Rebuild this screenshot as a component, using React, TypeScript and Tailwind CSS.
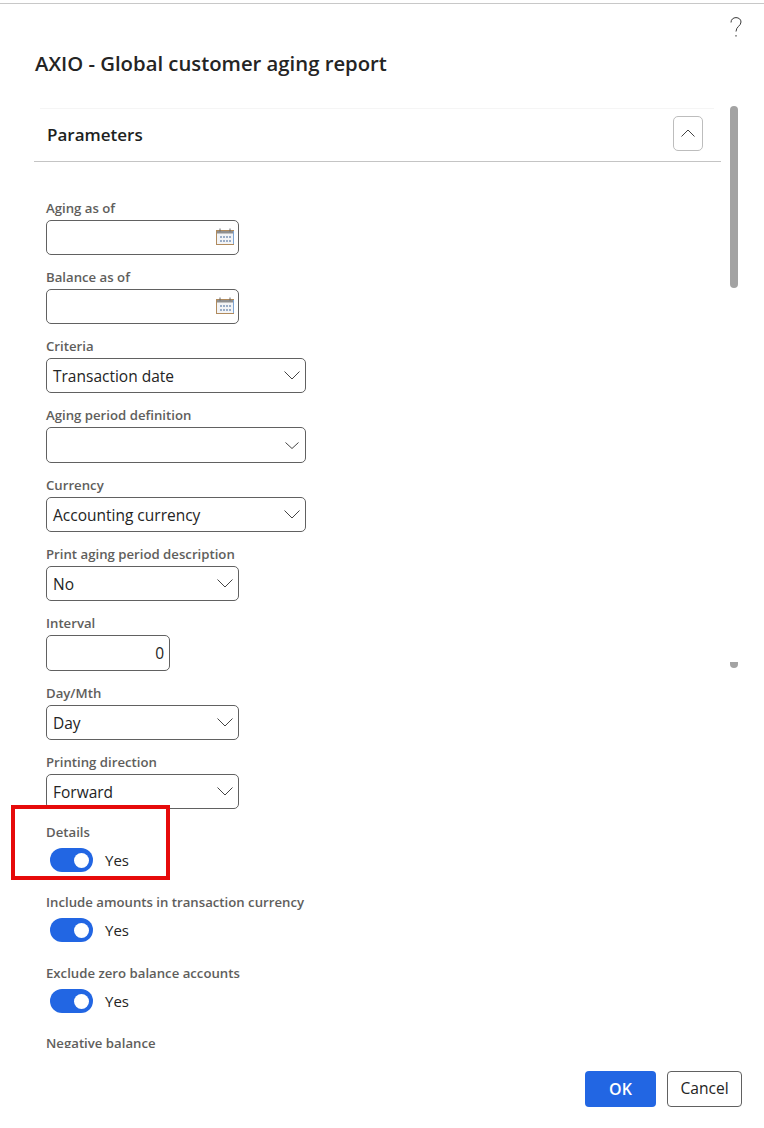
const font = { fontFamily: '"Open Sans", "Noto Sans", sans-serif' };

function Calendar() {
  return (
    <svg width="18" height="17" viewBox="0 0 18 17" className="absolute right-[4px] top-[7px]">
      <rect x="0.5" y="2.5" width="17" height="14" fill="#f3f4f6" stroke="#b08a5c" />
      <rect x="1" y="3" width="16" height="2.5" fill="#8f8f8f" />
      <path d="M4 0.5v3M14 0.5v3" stroke="#666" />
      <path d="M5 8v2M8 8v2M11 8v2M14 8v2M5 12v2M8 12v2M11 12v2M14 12v2" stroke="#5f7ea8" strokeWidth="1.2" />
      <path d="M17.5 3v13" stroke="#7ea6d6" />
    </svg>
  );
}

function Chevron({ small }: { small?: boolean }) {
  return (
    <svg
      width={small ? 14 : 16}
      height={small ? 7 : 9}
      viewBox={small ? "0 0 14 7" : "0 0 16 9"}
      className={small ? "absolute right-[6px] top-[14px]" : "absolute right-[5px] top-[12px]"}
    >
      <path d={small ? "M0.5 0.5L7 6.5L13.5 0.5" : "M0.5 0.5L8 8L15.5 0.5"} fill="none" stroke="#444" strokeWidth="1" />
    </svg>
  );
}

function Label({ text }: { text: string }) {
  return <div className="h-[22px] text-[13.2px] leading-[20px] font-semibold text-[#605e5c] whitespace-nowrap">{text}</div>;
}

function Box({ w, h = "h-[35px]", children }: { w: string; h?: string; children?: React.ReactNode }) {
  return (
    <div className={`relative ${w} ${h} rounded-[5px] border border-[#616161] bg-white pl-[6px] text-[15.5px] leading-[35px] text-[#242424]`}>
      {children}
    </div>
  );
}

function Field({ label, w, h, mb, children }: { label: string; w: string; h?: string; mb: string; children?: React.ReactNode }) {
  return (
    <div className={mb}>
      <Label text={label} />
      <Box w={w} h={h}>{children}</Box>
    </div>
  );
}

function Toggle({ label, mb }: { label: string; mb: string }) {
  return (
    <div className={mb}>
      <Label text={label} />
      <div className="mt-[4px] flex items-center pl-[4px]">
        <div className="flex h-[24px] w-[43px] items-center justify-end rounded-full bg-[#2266e3] pr-[4px]">
          <div className="h-[15px] w-[15px] rounded-full bg-white" />
        </div>
        <span className="ml-[12px] text-[15px] leading-[24px] text-[#242424]">Yes</span>
      </div>
    </div>
  );
}

export default function App() {
  return (
    <div className="relative h-[1128px] w-[764px] overflow-hidden bg-white" style={font}>
      <div className="mt-[3px] h-[1px] bg-[#c8c8c8]" />
      <div className="flex h-[44px] justify-end pr-[22px] pt-[13px]">
        <svg width="12" height="20" viewBox="0 0 12 20">
          <path d="M1 5.5C1 2.5 3.2 0.6 6 0.6C8.8 0.6 11 2.4 11 5C11 9 6 9.5 6 14.5M6 18v1.6" fill="none" stroke="#3a3a3a" strokeWidth="1" />
        </svg>
      </div>
      <h1 className="h-[60px] pl-[35px] text-[20.3px] leading-[30px] font-semibold text-[#242424]">AXIO - Global customer aging report</h1>

      <div className="ml-[40px] mr-[50px] h-[1px] bg-[#f5f5f5]" />
      <div className="ml-[34px] mr-[43px] flex h-[53px] items-center justify-between border-b border-[#c4c4c4] pb-[4px] pl-[13px] pr-[18px]">
        <span className="mt-[4px] text-[17px] font-semibold text-[#201f1e]">Parameters</span>
        <button className="flex h-[35px] w-[30px] items-center justify-center rounded-[5px] border border-[#bdbdbd] bg-white">
          <svg width="14" height="8" viewBox="0 0 14 8">
            <path d="M0.5 7.5L7 1L13.5 7.5" fill="none" stroke="#444" />
          </svg>
        </button>
      </div>

      <div className="h-[886px] overflow-hidden pl-[46px] pt-[36px]">
        <Field label="Aging as of" w="w-[193px]" mb="mb-[12px]"><Calendar /></Field>
        <Field label="Balance as of" w="w-[193px]" mb="mb-[12px]"><Calendar /></Field>
        <Field label="Criteria" w="w-[260px]" mb="mb-[12px]">Transaction date<Chevron /></Field>
        <Field label="Aging period definition" w="w-[260px]" h="h-[36px]" mb="mb-[12px]"><Chevron small /></Field>
        <Field label="Currency" w="w-[260px]" mb="mb-[12px]">Accounting currency<Chevron /></Field>
        <Field label="Print aging period description" w="w-[193px]" mb="mb-[12px]">No<Chevron /></Field>
        <Field label="Interval" w="w-[124px]" h="h-[36px]" mb="mb-[12px]"><div className="pr-[5px] text-right">0</div></Field>
        <Field label="Day/Mth" w="w-[193px]" mb="mb-[12px]">Day<Chevron /></Field>
        <Field label="Printing direction" w="w-[193px]" mb="mb-[13px]">Forward<Chevron /></Field>
        <Toggle label="Details" mb="mb-[20px]" />
        <Toggle label="Include amounts in transaction currency" mb="mb-[21px]" />
        <Toggle label="Exclude zero balance accounts" mb="mb-[20px]" />
        <Label text="Negative balance" />
      </div>

      <div className="flex justify-end gap-[11px] pr-[22px] pt-[23px]">
        <button className="h-[36px] w-[71px] rounded-[4px] bg-[#2266e3] text-[16px] font-semibold text-white">OK</button>
        <button className="h-[36px] w-[75px] rounded-[4px] border border-[#616161] bg-white text-[15.6px] font-medium text-[#242424]">Cancel</button>
      </div>

      <div className="absolute left-[730px] top-[106px] h-[182px] w-[8px] rounded-full bg-[#a3a3a3]" />
      <div className="absolute left-[730px] top-[662px] h-[6px] w-[8px] rounded-b-full bg-[#a3a3a3]" />
      <div className="absolute left-[11px] top-[805px] h-[75px] w-[159px] border-[4px] border-[#e60a0a]" />
    </div>
  );
}
